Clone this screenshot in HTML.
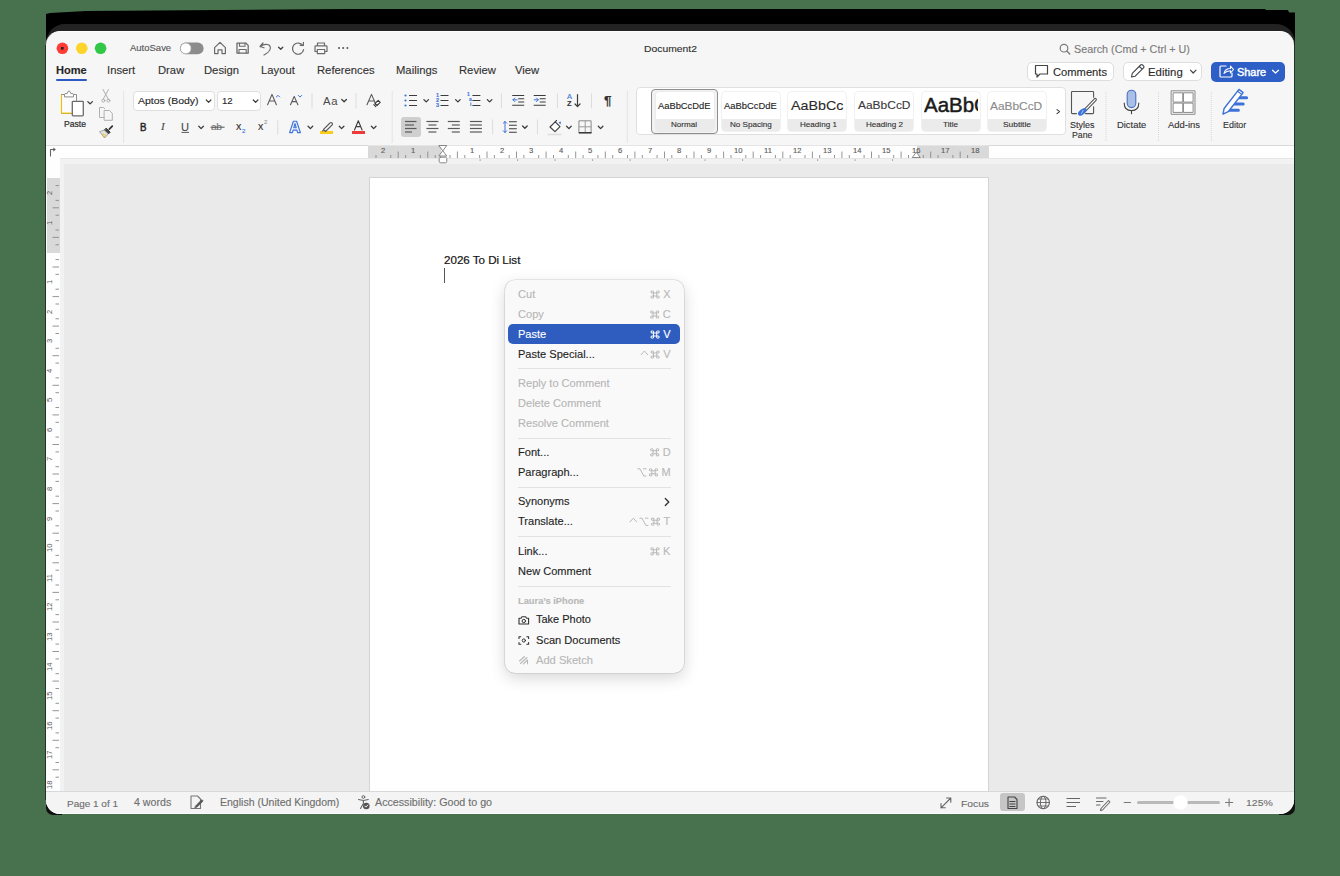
<!DOCTYPE html>
<html><head><meta charset="utf-8"><style>
*{margin:0;padding:0;box-sizing:border-box}
html,body{width:1340px;height:876px;overflow:hidden;background:#47724d;font-family:"Liberation Sans",sans-serif;color:#222}
.a{position:absolute}
.t{position:absolute;white-space:nowrap;line-height:1}
svg{position:absolute;left:0;top:0}
</style></head><body>
<div class="a" style="left:46px;top:9px;width:1248.5px;height:780px;background:#000;clip-path:polygon(0 5px,4px 4px,40px 2px,304px 0,1219px 0,1220px 1px,1242px 1px,1243px 3.5px,1249px 3.5px,1249px 100%,0 100%)"></div>
<div class="a" style="left:46px;top:24px;width:1249px;height:60px;background:#232323;border-radius:19px 19px 0 0"></div>
<div class="a" style="left:45.5px;top:795px;width:16px;height:19.5px;background:#111;border-radius:0 0 0 7px"></div>
<div class="a" style="left:1278.5px;top:795px;width:16px;height:19.5px;background:#111;border-radius:0 0 7px 0"></div>
<div class="a" style="left:46px;top:31px;width:1248px;height:783px;background:#f6f6f6;border-radius:14px;overflow:hidden;border-top:1px solid #fdfdfd"></div>
<div class="a" style="left:46px;top:144.5px;width:1248px;height:1px;background:#d9d9d9"></div>
<div class="a" style="left:46px;top:145.5px;width:1248px;height:12.5px;background:#fefefe"></div>
<div class="a" style="left:60px;top:158px;width:1234px;height:633px;background:#f2f2f2"></div>
<div class="a" style="left:64px;top:164px;width:1230px;height:627px;background:#eaeaea"></div>
<div class="a" style="left:60px;top:158px;width:1234px;height:1px;background:#e6e6e6"></div>
<div class="a" style="left:46px;top:158px;width:14px;height:633px;background:#fefefe"></div>
<div class="a" style="left:369px;top:177px;width:620px;height:614px;background:#fff;border:1px solid #d4d4d4;border-bottom:none"></div>
<div class="a" style="left:46px;top:791px;width:1248px;height:23px;background:#f4f4f4;border-top:1px solid #d8d8d8;border-radius:0 0 14px 14px;border-bottom:1px solid #fbfbfb"></div>
<div class="a" style="left:45px;top:45px;width:1px;height:755px;background:#22332a"></div>
<div class="a" style="left:1294px;top:45px;width:1px;height:755px;background:#22332a"></div>
<div class="t" style="left:130.4px;top:43.93px;font-size:9.03px;color:#555;transform:scaleX(1.0526);transform-origin:0 0;-webkit-text-stroke:0.12px #555;">AutoSave</div>
<div class="t" style="left:643.5px;top:43.63px;font-size:9.84px;color:#2e2e2e;transform:scaleX(1.0526);transform-origin:0 0;-webkit-text-stroke:0.12px #2e2e2e;">Document2</div>
<div class="t" style="left:1074.0px;top:45.31px;font-size:10.22px;color:#7a7a7a;transform:scaleX(1.0526);transform-origin:0 0;-webkit-text-stroke:0.12px #7a7a7a;">Search (Cmd + Ctrl + U)</div>
<div class="t" style="left:56.0px;top:65.18px;font-size:10.50px;color:#262626;font-weight:700;transform:scaleX(1.0526);transform-origin:0 0;-webkit-text-stroke:0.12px #262626;">Home</div>
<div class="a" style="left:56px;top:79px;width:31px;height:2px;background:#2b5bc2;border-radius:1px"></div>
<div class="t" style="left:106.7px;top:65.02px;font-size:10.69px;color:#333;transform:scaleX(1.0526);transform-origin:0 0;-webkit-text-stroke:0.12px #333;">Insert</div>
<div class="t" style="left:157.7px;top:65.02px;font-size:10.69px;color:#333;transform:scaleX(1.0526);transform-origin:0 0;-webkit-text-stroke:0.12px #333;">Draw</div>
<div class="t" style="left:204.2px;top:65.02px;font-size:10.69px;color:#333;transform:scaleX(1.0526);transform-origin:0 0;-webkit-text-stroke:0.12px #333;">Design</div>
<div class="t" style="left:260.5px;top:65.02px;font-size:10.69px;color:#333;transform:scaleX(1.0526);transform-origin:0 0;-webkit-text-stroke:0.12px #333;">Layout</div>
<div class="t" style="left:316.5px;top:65.02px;font-size:10.69px;color:#333;transform:scaleX(1.0526);transform-origin:0 0;-webkit-text-stroke:0.12px #333;">References</div>
<div class="t" style="left:395.5px;top:65.02px;font-size:10.69px;color:#333;transform:scaleX(1.0526);transform-origin:0 0;-webkit-text-stroke:0.12px #333;">Mailings</div>
<div class="t" style="left:458.7px;top:65.02px;font-size:10.69px;color:#333;transform:scaleX(1.0526);transform-origin:0 0;-webkit-text-stroke:0.12px #333;">Review</div>
<div class="t" style="left:515.4px;top:65.02px;font-size:10.69px;color:#333;transform:scaleX(1.0526);transform-origin:0 0;-webkit-text-stroke:0.12px #333;">View</div>
<div class="a" style="left:1027px;top:62px;width:87px;height:19px;background:#fff;border:1px solid #dedede;border-radius:5px"></div>
<div class="a" style="left:1123px;top:62px;width:79px;height:19px;background:#fff;border:1px solid #dedede;border-radius:5px"></div>
<div class="a" style="left:1211px;top:61.5px;width:74px;height:20px;background:#2e5fc7;border-radius:5px"></div>
<div class="t" style="left:1053.0px;top:67.38px;font-size:10.61px;color:#2a2a2a;transform:scaleX(1.0526);transform-origin:0 0;-webkit-text-stroke:0.12px #2a2a2a;">Comments</div>
<div class="t" style="left:1148.2px;top:67.21px;font-size:10.81px;color:#2a2a2a;transform:scaleX(1.0526);transform-origin:0 0;-webkit-text-stroke:0.12px #2a2a2a;">Editing</div>
<div class="t" style="left:1236.6px;top:67.60px;font-size:10.36px;color:#fff;transform:scaleX(1.0526);transform-origin:0 0;-webkit-text-stroke:0.4px #fff;">Share</div>
<div class="t" style="left:63.9px;top:121.36px;font-size:8.17px;color:#2e2e2e;transform:scaleX(1.0526);transform-origin:0 0;-webkit-text-stroke:0.2px #2e2e2e;">Paste</div>
<div class="a" style="left:132.5px;top:91.2px;width:82px;height:19.4px;background:#fff;border:1px solid #dfdfdf;border-radius:4px"></div>
<div class="a" style="left:217px;top:91.2px;width:44px;height:19.4px;background:#fff;border:1px solid #dfdfdf;border-radius:4px"></div>
<div class="t" style="left:138.0px;top:96.14px;font-size:9.96px;color:#262626;transform:scaleX(1.0526);transform-origin:0 0;-webkit-text-stroke:0.12px #262626;">Aptos (Body)</div>
<div class="t" style="left:221.5px;top:96.85px;font-size:9.12px;color:#262626;transform:scaleX(1.0526);transform-origin:0 0;-webkit-text-stroke:0.12px #262626;">12</div>
<div class="t" style="left:322.5px;top:95.68px;font-size:10.73px;color:#4a4a4a;transform:scaleX(1.0526);transform-origin:0 0;letter-spacing:0.6px">Aa</div>
<div class="t" style="left:139.9px;top:121.82px;font-size:10.80px;color:#262626;-webkit-text-stroke:0.5px #262626;transform:scaleX(0.9);transform-origin:0 0">B</div>
<div class="t" style="left:161.0px;top:121.74px;font-size:10.54px;color:#4a4a4a;transform:scaleX(1.0526);transform-origin:0 0;-webkit-text-stroke:0.12px #4a4a4a;font-family:Liberation Serif"><i>I</i></div>
<div class="t" style="left:181.2px;top:121.74px;font-size:10.54px;color:#4a4a4a;transform:scaleX(1.0526);transform-origin:0 0;-webkit-text-stroke:0.12px #4a4a4a;">U</div>
<div class="t" style="left:211.0px;top:122.46px;font-size:9.69px;color:#777;transform:scaleX(1.0526);transform-origin:0 0;-webkit-text-stroke:0.12px #777;letter-spacing:-0.3px">ab</div>
<div class="t" style="left:236.0px;top:122.14px;font-size:10.07px;color:#333;transform:scaleX(1.0526);transform-origin:0 0;-webkit-text-stroke:0.12px #333;">x</div>
<div class="t" style="left:242.2px;top:128.75px;font-size:5.70px;color:#3d72d9;transform:scaleX(1.0526);transform-origin:0 0;-webkit-text-stroke:0.12px #3d72d9;">2</div>
<div class="t" style="left:258.0px;top:122.14px;font-size:10.07px;color:#333;transform:scaleX(1.0526);transform-origin:0 0;-webkit-text-stroke:0.12px #333;">x</div>
<div class="t" style="left:264.2px;top:120.16px;font-size:5.70px;color:#999;transform:scaleX(1.0526);transform-origin:0 0;-webkit-text-stroke:0.12px #999;">2</div>
<div class="a" style="left:320px;top:131px;width:13px;height:3px;background:#f8cd1c"></div>
<div class="a" style="left:351.6px;top:131px;width:13.5px;height:3px;background:#eb3b3b"></div>
<div class="t" style="left:435.5px;top:93.26px;font-size:5.22px;color:#3d72d9;transform:scaleX(1.0526);transform-origin:0 0;-webkit-text-stroke:0.12px #3d72d9;font-weight:700">1</div>
<div class="t" style="left:435.5px;top:98.26px;font-size:5.22px;color:#3d72d9;transform:scaleX(1.0526);transform-origin:0 0;-webkit-text-stroke:0.12px #3d72d9;font-weight:700">2</div>
<div class="t" style="left:435.5px;top:103.26px;font-size:5.22px;color:#3d72d9;transform:scaleX(1.0526);transform-origin:0 0;-webkit-text-stroke:0.12px #3d72d9;font-weight:700">3</div>
<div class="t" style="left:467.4px;top:93.46px;font-size:4.75px;color:#3d72d9;transform:scaleX(1.0526);transform-origin:0 0;-webkit-text-stroke:0.12px #3d72d9;font-weight:700">1</div>
<div class="t" style="left:469.4px;top:98.46px;font-size:4.75px;color:#3d72d9;transform:scaleX(1.0526);transform-origin:0 0;-webkit-text-stroke:0.12px #3d72d9;font-weight:700">a</div>
<div class="t" style="left:470.4px;top:103.46px;font-size:4.75px;color:#3d72d9;transform:scaleX(1.0526);transform-origin:0 0;-webkit-text-stroke:0.12px #3d72d9;font-weight:700">i</div>
<div class="t" style="left:567.0px;top:94.44px;font-size:7.12px;color:#3d72d9;transform:scaleX(1.0526);transform-origin:0 0;-webkit-text-stroke:0.12px #3d72d9;">A</div>
<div class="t" style="left:567.0px;top:101.34px;font-size:7.12px;color:#333;font-weight:700;transform:scaleX(1.0526);transform-origin:0 0;-webkit-text-stroke:0.12px #333;">Z</div>
<div class="t" style="left:604.2px;top:94.60px;font-size:12.82px;color:#333;font-weight:700;transform:scaleX(1.0526);transform-origin:0 0;-webkit-text-stroke:0.12px #333;">¶</div>
<div class="a" style="left:401px;top:117px;width:20px;height:20px;background:#cfcfcf;border-radius:3px"></div>
<div class="a" style="left:636px;top:87.3px;width:430px;height:48px;background:#fff;border:1px solid #e0e0e0;border-radius:4px"></div>
<div class="a" style="left:651px;top:89.4px;width:66.5px;height:44.5px;background:#f2f2f2;border:1px solid #8e8e8e;border-radius:4px"></div>
<div class="a" style="left:655.7px;top:92.3px;width:58px;height:38.6px;background:#fff;border-radius:3px;box-shadow:0 0 0 0.5px #e4e4e4;overflow:hidden"></div>
<div class="a" style="left:655.7px;top:118.6px;width:58px;height:12.3px;background:#ebebeb;border-radius:0 0 3px 3px"></div>
<div class="t" style="left:657.9px;top:102.23px;font-size:8.90px;color:#1e1e1e;transform:scaleX(1.0526);transform-origin:0 0;-webkit-text-stroke:0.12px #1e1e1e;">AaBbCcDdE</div>
<div class="t" style="left:671.1px;top:120.76px;font-size:7.69px;color:#333;transform:scaleX(1.0526);transform-origin:0 0;-webkit-text-stroke:0.12px #333;">Normal</div>
<div class="a" style="left:722.3px;top:92.3px;width:58px;height:38.6px;background:#fff;border-radius:3px;box-shadow:0 0 0 0.5px #e4e4e4;overflow:hidden"></div>
<div class="a" style="left:722.3px;top:118.6px;width:58px;height:12.3px;background:#ebebeb;border-radius:0 0 3px 3px"></div>
<div class="t" style="left:724.3px;top:102.21px;font-size:8.93px;color:#1e1e1e;transform:scaleX(1.0526);transform-origin:0 0;-webkit-text-stroke:0.12px #1e1e1e;">AaBbCcDdE</div>
<div class="t" style="left:729.8px;top:120.76px;font-size:7.69px;color:#333;transform:scaleX(1.0526);transform-origin:0 0;-webkit-text-stroke:0.12px #333;">No Spacing</div>
<div class="a" style="left:788.3px;top:92.3px;width:58px;height:38.6px;background:#fff;border-radius:3px;box-shadow:0 0 0 0.5px #e4e4e4;overflow:hidden"></div>
<div class="a" style="left:788.3px;top:118.6px;width:58px;height:12.3px;background:#ebebeb;border-radius:0 0 3px 3px"></div>
<div class="t" style="left:791.3px;top:99.24px;font-size:13.59px;color:#2a2a2a;transform:scaleX(1.0526);transform-origin:0 0;-webkit-text-stroke:0.12px #2a2a2a;">AaBbCc</div>
<div class="t" style="left:799.5px;top:120.76px;font-size:7.69px;color:#333;transform:scaleX(1.0526);transform-origin:0 0;-webkit-text-stroke:0.12px #333;">Heading 1</div>
<div class="a" style="left:855px;top:92.3px;width:58px;height:38.6px;background:#fff;border-radius:3px;box-shadow:0 0 0 0.5px #e4e4e4;overflow:hidden"></div>
<div class="a" style="left:855px;top:118.6px;width:58px;height:12.3px;background:#ebebeb;border-radius:0 0 3px 3px"></div>
<div class="t" style="left:857.8px;top:100.34px;font-size:11.36px;color:#3a3a3a;transform:scaleX(1.0526);transform-origin:0 0;-webkit-text-stroke:0.12px #3a3a3a;">AaBbCcD</div>
<div class="t" style="left:866.0px;top:120.76px;font-size:7.69px;color:#333;transform:scaleX(1.0526);transform-origin:0 0;-webkit-text-stroke:0.12px #333;">Heading 2</div>
<div class="a" style="left:921.5px;top:92.3px;width:58px;height:38.6px;background:#fff;border-radius:3px;box-shadow:0 0 0 0.5px #e4e4e4;overflow:hidden"></div>
<div class="a" style="left:921.5px;top:118.6px;width:58px;height:12.3px;background:#ebebeb;border-radius:0 0 3px 3px"></div>
<div class="a" style="left:923.9px;top:95px;width:54.5px;height:22px;overflow:hidden">
<div class="t" style="left:0.0px;top:1.25px;font-size:19.47px;color:#1a1a1a;transform:scaleX(1.0526);transform-origin:0 0;-webkit-text-stroke:0.45px #1a1a1a;">AaBbCc</div>
</div>
<div class="t" style="left:943.3px;top:120.76px;font-size:7.69px;color:#333;transform:scaleX(1.0526);transform-origin:0 0;-webkit-text-stroke:0.12px #333;">Title</div>
<div class="a" style="left:988.2px;top:92.3px;width:58px;height:38.6px;background:#fff;border-radius:3px;box-shadow:0 0 0 0.5px #e4e4e4;overflow:hidden"></div>
<div class="a" style="left:988.2px;top:118.6px;width:58px;height:12.3px;background:#ebebeb;border-radius:0 0 3px 3px"></div>
<div class="t" style="left:990.4px;top:100.79px;font-size:11.30px;color:#8a8a8a;transform:scaleX(1.0526);transform-origin:0 0;-webkit-text-stroke:0.12px #8a8a8a;">AaBbCcD</div>
<div class="t" style="left:1003.0px;top:120.52px;font-size:7.98px;color:#333;transform:scaleX(1.0526);transform-origin:0 0;-webkit-text-stroke:0.12px #333;">Subtitle</div>
<div class="t" style="left:1069.6px;top:121.16px;font-size:8.51px;color:#333;transform:scaleX(1.0526);transform-origin:0 0;-webkit-text-stroke:0.12px #333;">Styles</div>
<div class="t" style="left:1072.4px;top:131.20px;font-size:7.52px;color:#333;transform:scaleX(1.0526);transform-origin:0 0;-webkit-text-stroke:0.12px #333;font-size:8.3px">Pane</div>
<div class="t" style="left:1117.0px;top:120.80px;font-size:8.94px;color:#333;transform:scaleX(1.0526);transform-origin:0 0;-webkit-text-stroke:0.12px #333;">Dictate</div>
<div class="t" style="left:1168.0px;top:120.78px;font-size:8.97px;color:#333;transform:scaleX(1.0526);transform-origin:0 0;-webkit-text-stroke:0.12px #333;">Add-ins</div>
<div class="t" style="left:1223.0px;top:121.20px;font-size:8.47px;color:#333;transform:scaleX(1.0526);transform-origin:0 0;-webkit-text-stroke:0.12px #333;">Editor</div>
<div class="a" style="left:367.5px;top:145.3px;width:73px;height:13.2px;background:#d9d9d9"></div>
<div class="a" style="left:916.5px;top:145.3px;width:72px;height:13.2px;background:#d9d9d9"></div>
<div class="a" style="left:367.5px;top:145px;width:621px;height:0.6px;background:#e5e5e5"></div>
<div class="t" style="left:381.3px;top:146.66px;font-size:7.22px;color:#5a5a5a;transform:scaleX(1.0526);transform-origin:0 0;-webkit-text-stroke:0.12px #5a5a5a;">2</div>
<div class="t" style="left:410.9px;top:146.66px;font-size:7.22px;color:#5a5a5a;transform:scaleX(1.0526);transform-origin:0 0;-webkit-text-stroke:0.12px #5a5a5a;">1</div>
<div class="t" style="left:470.1px;top:146.66px;font-size:7.22px;color:#5a5a5a;transform:scaleX(1.0526);transform-origin:0 0;-webkit-text-stroke:0.12px #5a5a5a;">1</div>
<div class="t" style="left:499.7px;top:146.66px;font-size:7.22px;color:#5a5a5a;transform:scaleX(1.0526);transform-origin:0 0;-webkit-text-stroke:0.12px #5a5a5a;">2</div>
<div class="t" style="left:529.2px;top:146.66px;font-size:7.22px;color:#5a5a5a;transform:scaleX(1.0526);transform-origin:0 0;-webkit-text-stroke:0.12px #5a5a5a;">3</div>
<div class="t" style="left:558.8px;top:146.66px;font-size:7.22px;color:#5a5a5a;transform:scaleX(1.0526);transform-origin:0 0;-webkit-text-stroke:0.12px #5a5a5a;">4</div>
<div class="t" style="left:588.4px;top:146.66px;font-size:7.22px;color:#5a5a5a;transform:scaleX(1.0526);transform-origin:0 0;-webkit-text-stroke:0.12px #5a5a5a;">5</div>
<div class="t" style="left:618.0px;top:146.66px;font-size:7.22px;color:#5a5a5a;transform:scaleX(1.0526);transform-origin:0 0;-webkit-text-stroke:0.12px #5a5a5a;">6</div>
<div class="t" style="left:647.6px;top:146.66px;font-size:7.22px;color:#5a5a5a;transform:scaleX(1.0526);transform-origin:0 0;-webkit-text-stroke:0.12px #5a5a5a;">7</div>
<div class="t" style="left:677.1px;top:146.66px;font-size:7.22px;color:#5a5a5a;transform:scaleX(1.0526);transform-origin:0 0;-webkit-text-stroke:0.12px #5a5a5a;">8</div>
<div class="t" style="left:706.7px;top:146.66px;font-size:7.22px;color:#5a5a5a;transform:scaleX(1.0526);transform-origin:0 0;-webkit-text-stroke:0.12px #5a5a5a;">9</div>
<div class="t" style="left:734.2px;top:146.66px;font-size:7.22px;color:#5a5a5a;transform:scaleX(1.0526);transform-origin:0 0;-webkit-text-stroke:0.12px #5a5a5a;">10</div>
<div class="t" style="left:763.8px;top:146.66px;font-size:7.22px;color:#5a5a5a;transform:scaleX(1.0526);transform-origin:0 0;-webkit-text-stroke:0.12px #5a5a5a;">11</div>
<div class="t" style="left:793.4px;top:146.66px;font-size:7.22px;color:#5a5a5a;transform:scaleX(1.0526);transform-origin:0 0;-webkit-text-stroke:0.12px #5a5a5a;">12</div>
<div class="t" style="left:822.9px;top:146.66px;font-size:7.22px;color:#5a5a5a;transform:scaleX(1.0526);transform-origin:0 0;-webkit-text-stroke:0.12px #5a5a5a;">13</div>
<div class="t" style="left:852.5px;top:146.66px;font-size:7.22px;color:#5a5a5a;transform:scaleX(1.0526);transform-origin:0 0;-webkit-text-stroke:0.12px #5a5a5a;">14</div>
<div class="t" style="left:882.1px;top:146.66px;font-size:7.22px;color:#5a5a5a;transform:scaleX(1.0526);transform-origin:0 0;-webkit-text-stroke:0.12px #5a5a5a;">15</div>
<div class="t" style="left:911.7px;top:146.66px;font-size:7.22px;color:#5a5a5a;transform:scaleX(1.0526);transform-origin:0 0;-webkit-text-stroke:0.12px #5a5a5a;">16</div>
<div class="t" style="left:941.3px;top:146.66px;font-size:7.22px;color:#5a5a5a;transform:scaleX(1.0526);transform-origin:0 0;-webkit-text-stroke:0.12px #5a5a5a;">17</div>
<div class="t" style="left:970.8px;top:146.66px;font-size:7.22px;color:#5a5a5a;transform:scaleX(1.0526);transform-origin:0 0;-webkit-text-stroke:0.12px #5a5a5a;">18</div>
<div class="a" style="left:46.5px;top:177.5px;width:13.2px;height:75px;background:#d9d9d9"></div>
<div class="t" style="left:46.0px;top:195.1px;font-size:7.6px;color:#5a5a5a;transform-origin:0 0;transform:rotate(-90deg)">2</div>
<div class="t" style="left:46.0px;top:224.7px;font-size:7.6px;color:#5a5a5a;transform-origin:0 0;transform:rotate(-90deg)">1</div>
<div class="t" style="left:46.0px;top:283.9px;font-size:7.6px;color:#5a5a5a;transform-origin:0 0;transform:rotate(-90deg)">1</div>
<div class="t" style="left:46.0px;top:313.5px;font-size:7.6px;color:#5a5a5a;transform-origin:0 0;transform:rotate(-90deg)">2</div>
<div class="t" style="left:46.0px;top:343.0px;font-size:7.6px;color:#5a5a5a;transform-origin:0 0;transform:rotate(-90deg)">3</div>
<div class="t" style="left:46.0px;top:372.6px;font-size:7.6px;color:#5a5a5a;transform-origin:0 0;transform:rotate(-90deg)">4</div>
<div class="t" style="left:46.0px;top:402.2px;font-size:7.6px;color:#5a5a5a;transform-origin:0 0;transform:rotate(-90deg)">5</div>
<div class="t" style="left:46.0px;top:431.8px;font-size:7.6px;color:#5a5a5a;transform-origin:0 0;transform:rotate(-90deg)">6</div>
<div class="t" style="left:46.0px;top:461.4px;font-size:7.6px;color:#5a5a5a;transform-origin:0 0;transform:rotate(-90deg)">7</div>
<div class="t" style="left:46.0px;top:490.9px;font-size:7.6px;color:#5a5a5a;transform-origin:0 0;transform:rotate(-90deg)">8</div>
<div class="t" style="left:46.0px;top:520.5px;font-size:7.6px;color:#5a5a5a;transform-origin:0 0;transform:rotate(-90deg)">9</div>
<div class="t" style="left:46.0px;top:552.2px;font-size:7.6px;color:#5a5a5a;transform-origin:0 0;transform:rotate(-90deg)">10</div>
<div class="t" style="left:46.0px;top:581.8px;font-size:7.6px;color:#5a5a5a;transform-origin:0 0;transform:rotate(-90deg)">11</div>
<div class="t" style="left:46.0px;top:611.4px;font-size:7.6px;color:#5a5a5a;transform-origin:0 0;transform:rotate(-90deg)">12</div>
<div class="t" style="left:46.0px;top:640.9px;font-size:7.6px;color:#5a5a5a;transform-origin:0 0;transform:rotate(-90deg)">13</div>
<div class="t" style="left:46.0px;top:670.5px;font-size:7.6px;color:#5a5a5a;transform-origin:0 0;transform:rotate(-90deg)">14</div>
<div class="t" style="left:46.0px;top:700.1px;font-size:7.6px;color:#5a5a5a;transform-origin:0 0;transform:rotate(-90deg)">15</div>
<div class="t" style="left:46.0px;top:729.7px;font-size:7.6px;color:#5a5a5a;transform-origin:0 0;transform:rotate(-90deg)">16</div>
<div class="t" style="left:46.0px;top:759.3px;font-size:7.6px;color:#5a5a5a;transform-origin:0 0;transform:rotate(-90deg)">17</div>
<div class="t" style="left:46.0px;top:788.8px;font-size:7.6px;color:#5a5a5a;transform-origin:0 0;transform:rotate(-90deg)">18</div>
<div class="t" style="left:444.2px;top:254.85px;font-size:11.00px;color:#151515;transform:scaleX(1.0526);transform-origin:0 0;-webkit-text-stroke:0.2px #151515;">2026 To Di List</div>
<div class="a" style="left:444px;top:268px;width:1px;height:14.8px;background:#555"></div>
<div class="t" style="left:66.5px;top:798.75px;font-size:9.47px;color:#6e6e6e;transform:scaleX(1.0526);transform-origin:0 0;-webkit-text-stroke:0.12px #6e6e6e;">Page 1 of 1</div>
<div class="t" style="left:134.4px;top:798.20px;font-size:10.12px;color:#6e6e6e;transform:scaleX(1.0526);transform-origin:0 0;-webkit-text-stroke:0.12px #6e6e6e;">4 words</div>
<div class="t" style="left:219.5px;top:798.30px;font-size:10.00px;color:#6e6e6e;transform:scaleX(1.0526);transform-origin:0 0;-webkit-text-stroke:0.12px #6e6e6e;">English (United Kingdom)</div>
<div class="t" style="left:375.0px;top:798.17px;font-size:10.16px;color:#6e6e6e;transform:scaleX(1.0526);transform-origin:0 0;-webkit-text-stroke:0.12px #6e6e6e;">Accessibility: Good to go</div>
<div class="t" style="left:960.6px;top:798.50px;font-size:9.77px;color:#6e6e6e;transform:scaleX(1.0526);transform-origin:0 0;-webkit-text-stroke:0.12px #6e6e6e;">Focus</div>
<div class="a" style="left:1000px;top:793.4px;width:25.4px;height:18px;background:#c6c6c6;border-radius:3px"></div>
<div class="a" style="left:1137px;top:801px;width:82.5px;height:3px;background:#b9b9b9;border-radius:1.5px"></div>

<div class="t" style="left:1246.3px;top:798.34px;font-size:9.96px;color:#6e6e6e;transform:scaleX(1.0526);transform-origin:0 0;-webkit-text-stroke:0.12px #6e6e6e;">125%</div>
<svg width="1340" height="876" viewBox="0 0 1340 876" fill="none" stroke-linecap="round" stroke-linejoin="round">
<circle cx="62.4" cy="48.3" r="5.8" fill="#fe3c35" stroke="none"/>
<circle cx="81.8" cy="48.3" r="5.8" fill="#fdd42b" stroke="none"/>
<circle cx="100.6" cy="48.3" r="5.8" fill="#33c748" stroke="none"/>
<rect x="61" y="47" width="2.6" height="2.6" fill="#222" stroke="none"/>
<rect x="180" y="42.6" width="23.6" height="11.6" rx="5.8" fill="#8c8c8c" stroke="none"/>
<circle cx="185.8" cy="48.4" r="5.4" fill="#fff" stroke="#9a9a9a" stroke-width="0.6"/>
<path d="M214.6 47.6 L220 42.4 L225.4 47.6 V53.6 H222 V49.8 H218 V53.6 H214.6 Z" stroke="#6a6a6a" stroke-width="1.2"/>
<path d="M237 43.2 H246 L248.2 45.4 V53.2 H237 Z" stroke="#6a6a6a" stroke-width="1.3"/>
<path d="M239.5 43.2 V46.2 H245 V43.2 M239 53.2 V49.5 H246.2 V53.2" stroke="#6a6a6a" stroke-width="1.1"/>
<path d="M260 46.5 L263 43 M260 46.5 L264 47.8 M260.5 46.3 C265 43 271 44 270.3 48.5 C270 51 266 54 264 55" stroke="#6a6a6a" stroke-width="1.2"/>
<path d="M278.6 47.2 L280.7 49.3 L282.8 47.2" stroke="#444" stroke-width="1.3"/>
<path d="M302.8 45.6 A5.6 5.6 0 1 0 303.6 49.6" stroke="#6a6a6a" stroke-width="1.2"/>
<path d="M300.2 45.4 H303.4 V42.4" stroke="#6a6a6a" stroke-width="1.2"/>
<path d="M317.5 46 V43 H324.5 V46 M317 51.5 H315 V46.5 Q315 45.8 316 45.8 H326 Q327 45.8 327 46.5 V51.5 H325 M317.3 49.5 H324.7 V53.6 H317.3 Z" stroke="#6a6a6a" stroke-width="1.2"/>
<circle cx="339" cy="47.9" r="1" fill="#555" stroke="none"/>
<circle cx="343.2" cy="47.9" r="1" fill="#555" stroke="none"/>
<circle cx="347.4" cy="47.9" r="1" fill="#555" stroke="none"/>
<circle cx="1064" cy="48.2" r="3.8" stroke="#7a7a7a" stroke-width="1.2"/><path d="M1066.8 51 L1069.8 54" stroke="#7a7a7a" stroke-width="1.3"/>
<path d="M1035.5 65.5 H1047.5 V74 H1040 L1037 77 V74 H1035.5 Z" stroke="#444" stroke-width="1.2"/>
<path d="M1131.5 77 L1132.3 73.3 L1140.6 65 Q1141.6 64 1142.6 65 L1143.5 65.9 Q1144.5 66.9 1143.5 67.9 L1135.2 76.2 Z M1139.3 66.3 L1142.2 69.2" stroke="#444" stroke-width="1.1"/>
<path d="M1190.4 70.2 L1193.2 73 L1196 70.2" stroke="#444" stroke-width="1.2"/>
<path d="M1226 66 H1221 Q1220 66 1220 67 V76 Q1220 77 1221 77 H1231 Q1232 77 1232 76 V73" stroke="#fff" stroke-width="1.2"/>
<path d="M1224 73.5 Q1225 68.5 1230.5 68.5 V66 L1233.5 69.5 L1230.5 73 V70.8 Q1226.5 70.8 1224 73.5 Z" stroke="#fff" stroke-width="1.1"/>
<path d="M1272.5 70.2 L1275.5 73 L1278.5 70.2" stroke="#fff" stroke-width="1.2"/>
<line x1="123.6" y1="91.5" x2="123.6" y2="142.5" stroke="#d2d2d2" stroke-width="1" stroke-dasharray="1 1" stroke-linecap="butt"/>
<line x1="392.2" y1="91.5" x2="392.2" y2="142.5" stroke="#d2d2d2" stroke-width="1" stroke-dasharray="1 1" stroke-linecap="butt"/>
<line x1="627.3" y1="91.5" x2="627.3" y2="142.5" stroke="#d2d2d2" stroke-width="1" stroke-dasharray="1 1" stroke-linecap="butt"/>
<line x1="1106" y1="92" x2="1106" y2="141" stroke="#d8d8d8" stroke-width="1" stroke-dasharray="1 1" stroke-linecap="butt"/>
<line x1="1158.5" y1="92" x2="1158.5" y2="141" stroke="#d8d8d8" stroke-width="1" stroke-dasharray="1 1" stroke-linecap="butt"/>
<line x1="1211.3" y1="92" x2="1211.3" y2="141" stroke="#d8d8d8" stroke-width="1" stroke-dasharray="1 1" stroke-linecap="butt"/>
<line x1="312" y1="93" x2="312" y2="108.5" stroke="#dcdcdc" stroke-width="1" stroke-linecap="butt"/>
<line x1="356" y1="93" x2="356" y2="108.5" stroke="#dcdcdc" stroke-width="1" stroke-linecap="butt"/>
<line x1="277.8" y1="120.3" x2="277.8" y2="134.4" stroke="#dcdcdc" stroke-width="1" stroke-linecap="butt"/>
<line x1="501.4" y1="93.4" x2="501.4" y2="108.3" stroke="#dcdcdc" stroke-width="1" stroke-linecap="butt"/>
<line x1="557.4" y1="93.4" x2="557.4" y2="108.3" stroke="#dcdcdc" stroke-width="1" stroke-linecap="butt"/>
<line x1="591.5" y1="93.4" x2="591.5" y2="108.3" stroke="#dcdcdc" stroke-width="1" stroke-linecap="butt"/>
<line x1="492.6" y1="119.5" x2="492.6" y2="134.4" stroke="#dcdcdc" stroke-width="1" stroke-linecap="butt"/>
<line x1="537.4" y1="119.5" x2="537.4" y2="134.4" stroke="#dcdcdc" stroke-width="1" stroke-linecap="butt"/>
<rect x="61.5" y="94.5" width="15" height="19" fill="#fbfbfb" stroke="none"/>
<path d="M61.5 94.5 H76.5 V100.5 M61.5 94.5 V113.5 H71.5" stroke="#8e8e8e" stroke-width="1"/>
<path d="M61.5 95 V113.2 H71" stroke="#f2c200" stroke-width="1.2" stroke-dasharray="1.2 1"/>
<path d="M64.5 96.5 V94.5 Q64.5 93.6 66 93.6 H67.2 Q67.8 91 69 91 Q70.3 91 70.8 93.6 H72 Q73.5 93.6 73.5 94.5 V96.5 Z" fill="#fff" stroke="#8e8e8e" stroke-width="1"/>
<rect x="72.3" y="101.3" width="11" height="14.5" rx="0.8" fill="#fff" stroke="#6a6a6a" stroke-width="1.3"/>
<path d="M87.8 101.6 L90.1 103.9 L92.4 101.6" stroke="#3c3c3c" stroke-width="1.3"/>
<path d="M103 89.5 L108.5 99.5 M108.5 89.5 L103 99.5" stroke="#b0b0b0" stroke-width="1"/>
<circle cx="103.4" cy="100.6" r="1.5" stroke="#b0b0b0" stroke-width="1"/><circle cx="108.4" cy="100.6" r="1.5" stroke="#b0b0b0" stroke-width="1"/>
<path d="M104 117.5 H99.5 V107.5 H103.5 L104.8 108.8" stroke="#b0b0b0" stroke-width="1"/>
<path d="M104.5 110.5 H109.5 L112.3 113.3 V120.3 H104.5 Z" stroke="#b0b0b0" stroke-width="1"/>
<path d="M112.3 126.1 L109.3 129.1" stroke="#333" stroke-width="1.8"/>
<path d="M106.4 128.4 L110.2 132.2 L108.4 134 L104.6 130.2 Z" fill="#444" stroke="#333" stroke-width="1"/>
<path d="M104.6 130.4 L108.2 134 L104.6 138 L99.8 132 Z" fill="#e2e2e2" stroke="#9a9a9a" stroke-width="0.9"/>
<circle cx="103.2" cy="134.2" r="0.8" fill="#f2c200" stroke="none"/><circle cx="105.2" cy="135" r="0.8" fill="#f2c200" stroke="none"/><circle cx="104.2" cy="136.8" r="0.8" fill="#f2c200" stroke="none"/>
<path d="M206.3 100 L208.6 102.3 L210.9 100" stroke="#3c3c3c" stroke-width="1.2"/>
<path d="M253.3 100 L255.6 102.3 L257.9 100" stroke="#3c3c3c" stroke-width="1.2"/>
<path d="M267.6 104.8 L272 94.4 L276.4 104.8 M269.3 101 H274.7" stroke="#5a5a5a" stroke-width="1.1"/>
<path d="M276.3 97 L278 95.3 L279.7 97" stroke="#3d72d9" stroke-width="1"/>
<path d="M290.5 104.8 L294.2 96.4 L297.9 104.8 M292 101.6 H296.4" stroke="#5a5a5a" stroke-width="1.1"/>
<path d="M298.3 95.4 L300 97.1 L301.7 95.4" stroke="#3d72d9" stroke-width="1"/>
<path d="M341.8 99.5 L344.1 101.8 L346.4 99.5" stroke="#3c3c3c" stroke-width="1.3"/>
<path d="M367 104.8 L371.5 94.4 L376 104.8 M368.7 101 H374.3" stroke="#5a5a5a" stroke-width="1.1"/>
<path d="M375 103.5 L378.2 100.3 L380.2 102.3 L377 105.5 Z" fill="#fff" stroke="#3c3c3c" stroke-width="1.1"/>
<path d="M373.8 104.7 L375.8 106.7" stroke="#3c3c3c" stroke-width="1.1"/>
<line x1="181.5" y1="132.4" x2="189" y2="132.4" stroke="#5a5a5a" stroke-width="1" stroke-linecap="butt"/>
<path d="M198.8 126.3 L201.1 128.6 L203.4 126.3" stroke="#3c3c3c" stroke-width="1.3"/>
<line x1="210.5" y1="127.2" x2="224.6" y2="127.2" stroke="#555" stroke-width="1" stroke-linecap="butt"/>
<path d="M289.6 132.6 L293.4 121.2 H296.6 L300.4 132.6 H297.6 L296.9 130.1 H293.1 L292.4 132.6 Z M293.8 127.7 H296.2 L295 123.6 Z" fill="#eef3fc" stroke="#3d72d9" stroke-width="1.15" fill-rule="evenodd"/>
<path d="M308.1 126.3 L310.4 128.6 L312.7 126.3" stroke="#3c3c3c" stroke-width="1.3"/>
<path d="M323.5 129.5 L330 123 Q331 122 332 123 Q333 124 332 125 L325.5 131.5 Z" fill="#fff" stroke="#5a5a5a" stroke-width="1.1"/>
<path d="M322.5 131 L323.8 129.8" stroke="#5a5a5a" stroke-width="1.1"/>
<path d="M339.3 126.3 L341.6 128.6 L343.9 126.3" stroke="#3c3c3c" stroke-width="1.3"/>
<path d="M354.5 130 L358.3 120.8 L362.1 130 M356 126.6 H360.6" stroke="#3c3c3c" stroke-width="1.1"/>
<path d="M371.4 126.3 L373.7 128.6 L376 126.3" stroke="#3c3c3c" stroke-width="1.3"/>
<line x1="409" y1="95.5" x2="417" y2="95.5" stroke="#3c3c3c" stroke-width="1" stroke-linecap="butt"/>
<circle cx="405.5" cy="95.5" r="1.1" fill="#3d72d9" stroke="none"/>
<line x1="409" y1="100.5" x2="417" y2="100.5" stroke="#3c3c3c" stroke-width="1" stroke-linecap="butt"/>
<circle cx="405.5" cy="100.5" r="1.1" fill="#3d72d9" stroke="none"/>
<line x1="409" y1="105.5" x2="417" y2="105.5" stroke="#3c3c3c" stroke-width="1" stroke-linecap="butt"/>
<circle cx="405.5" cy="105.5" r="1.1" fill="#3d72d9" stroke="none"/>
<line x1="440.5" y1="95.5" x2="448.5" y2="95.5" stroke="#3c3c3c" stroke-width="1" stroke-linecap="butt"/>
<line x1="440.5" y1="100.5" x2="448.5" y2="100.5" stroke="#3c3c3c" stroke-width="1" stroke-linecap="butt"/>
<line x1="440.5" y1="105.5" x2="448.5" y2="105.5" stroke="#3c3c3c" stroke-width="1" stroke-linecap="butt"/>
<line x1="472.4" y1="95.5" x2="480.4" y2="95.5" stroke="#3c3c3c" stroke-width="1" stroke-linecap="butt"/>
<line x1="472.4" y1="100.5" x2="480.4" y2="100.5" stroke="#3c3c3c" stroke-width="1" stroke-linecap="butt"/>
<line x1="472.4" y1="105.5" x2="480.4" y2="105.5" stroke="#3c3c3c" stroke-width="1" stroke-linecap="butt"/>
<path d="M423.90000000000003 99.6 L426.20000000000005 101.9 L428.5 99.6" stroke="#3c3c3c" stroke-width="1.3"/>
<path d="M455.6 99.6 L457.90000000000003 101.9 L460.2 99.6" stroke="#3c3c3c" stroke-width="1.3"/>
<path d="M487.3 99.6 L489.6 101.9 L491.9 99.6" stroke="#3c3c3c" stroke-width="1.3"/>
<path d="M512.2 95.5 H524.2 M518.2 98.8 H524.2 M518.2 102 H524.2 M512.2 105.3 H524.2" stroke="#3c3c3c" stroke-width="1.1" stroke-linecap="butt"/>
<path d="M517.2 99.8 H513.0 M514.8000000000001 98 L513.0 99.8 L514.8000000000001 101.6" stroke="#3d72d9" stroke-width="1"/>
<path d="M533.7 95.5 H545.7 M539.7 98.8 H545.7 M539.7 102 H545.7 M533.7 105.3 H545.7" stroke="#3c3c3c" stroke-width="1.1" stroke-linecap="butt"/>
<path d="M534.2 99.8 H538.3000000000001 M536.5 98 L538.3000000000001 99.8 L536.5 101.6" stroke="#3d72d9" stroke-width="1"/>
<path d="M577.5 94.5 V106.5 M575 104 L577.5 106.6 L580 104" stroke="#3c3c3c" stroke-width="1.2"/>
<line x1="405" y1="121.5" x2="416.5" y2="121.5" stroke="#5a5a5a" stroke-width="1.2" stroke-linecap="butt"/>
<line x1="405" y1="125" x2="414" y2="125" stroke="#5a5a5a" stroke-width="1.2" stroke-linecap="butt"/>
<line x1="405" y1="128.5" x2="416.5" y2="128.5" stroke="#5a5a5a" stroke-width="1.2" stroke-linecap="butt"/>
<line x1="405" y1="132" x2="412" y2="132" stroke="#5a5a5a" stroke-width="1.2" stroke-linecap="butt"/>
<line x1="426.4" y1="121.5" x2="438.4" y2="121.5" stroke="#5a5a5a" stroke-width="1.2" stroke-linecap="butt"/>
<line x1="428.4" y1="125" x2="436.4" y2="125" stroke="#5a5a5a" stroke-width="1.2" stroke-linecap="butt"/>
<line x1="426.4" y1="128.5" x2="438.4" y2="128.5" stroke="#5a5a5a" stroke-width="1.2" stroke-linecap="butt"/>
<line x1="428.4" y1="132" x2="436.4" y2="132" stroke="#5a5a5a" stroke-width="1.2" stroke-linecap="butt"/>
<line x1="447.8" y1="121.5" x2="459.8" y2="121.5" stroke="#5a5a5a" stroke-width="1.2" stroke-linecap="butt"/>
<line x1="451.8" y1="125" x2="459.8" y2="125" stroke="#5a5a5a" stroke-width="1.2" stroke-linecap="butt"/>
<line x1="447.8" y1="128.5" x2="459.8" y2="128.5" stroke="#5a5a5a" stroke-width="1.2" stroke-linecap="butt"/>
<line x1="451.8" y1="132" x2="459.8" y2="132" stroke="#5a5a5a" stroke-width="1.2" stroke-linecap="butt"/>
<line x1="469.9" y1="121.5" x2="481.9" y2="121.5" stroke="#5a5a5a" stroke-width="1.2" stroke-linecap="butt"/>
<line x1="469.9" y1="125" x2="481.9" y2="125" stroke="#5a5a5a" stroke-width="1.2" stroke-linecap="butt"/>
<line x1="469.9" y1="128.5" x2="481.9" y2="128.5" stroke="#5a5a5a" stroke-width="1.2" stroke-linecap="butt"/>
<line x1="469.9" y1="132" x2="481.9" y2="132" stroke="#5a5a5a" stroke-width="1.2" stroke-linecap="butt"/>
<path d="M509 121.8 H516.8 M509 125.3 H516.8 M509 128.8 H516.8 M509 132.2 H516.8" stroke="#3c3c3c" stroke-width="1.1" stroke-linecap="butt"/>
<path d="M505 121.5 V132.5 M503.3 123.2 L505 121.5 L506.7 123.2 M503.3 130.8 L505 132.5 L506.7 130.8" stroke="#3d72d9" stroke-width="1"/>
<path d="M522.6 126 L524.9 128.3 L527.2 126" stroke="#3c3c3c" stroke-width="1.3"/>
<path d="M550 127 L555.2 121.8 L560 126.6 L555 131.6 Z" fill="#fff" stroke="#3c3c3c" stroke-width="1.1"/>
<path d="M555.2 121.8 L556.5 120.5" stroke="#3c3c3c" stroke-width="1.1"/><path d="M558.5 122.5 L560.5 124.5 L561 121.5 Z" fill="#3d72d9" stroke="none"/>
<line x1="548" y1="134.5" x2="561" y2="134.5" stroke="#ddd" stroke-width="1.4"/>
<path d="M566.6 126.3 L568.9 128.6 L571.2 126.3" stroke="#3c3c3c" stroke-width="1.3"/>
<rect x="579.3" y="120.8" width="11.8" height="12" stroke="#8a8a8a" stroke-width="1"/><path d="M585.2 120.8 V132.8 M579.3 126.8 H591.1" stroke="#9a9a9a" stroke-width="1"/><path d="M579.3 132.8 H591.1" stroke="#3c3c3c" stroke-width="1.4"/>
<path d="M598.3 126.3 L600.6 128.6 L602.9 126.3" stroke="#3c3c3c" stroke-width="1.3"/>
<path d="M1057 109.6 L1059.6 111.6 L1057 113.6" stroke="#3c3c3c" stroke-width="1.1"/>
<path d="M1085.5 113.6 H1092.8 Q1093.6 113.6 1093.6 112.8 V106.8 M1093.6 97.2 V92.3 Q1093.6 91.5 1092.8 91.5 H1072.3 Q1071.5 91.5 1071.5 92.3 V112.8 Q1071.5 113.6 1072.3 113.6 H1076.5" stroke="#555" stroke-width="1.1"/>
<path d="M1095.2 99.6 L1085.6 109.6" stroke="#555" stroke-width="3.4"/><path d="M1095.2 99.6 L1085.6 109.6" stroke="#fff" stroke-width="1.3"/>
<ellipse cx="1082.3" cy="111.9" rx="5" ry="2.6" transform="rotate(-38 1082.3 111.9)" fill="#3d72d9" stroke="none"/>
<path d="M1081.5 113.5 L1083.2 110.3" stroke="#cfd9ee" stroke-width="0.8"/>
<rect x="1127.2" y="90.2" width="8.6" height="17.4" rx="4.3" fill="#a9bfe8" stroke="#4a72c0" stroke-width="1.1"/>
<path d="M1124.2 103 Q1124.2 110.6 1131.5 110.6 Q1138.8 110.6 1138.8 103 M1131.5 110.6 V113.8" stroke="#444" stroke-width="1.1"/>
<rect x="1171.5" y="90.8" width="23.5" height="23.5" stroke="#8a8a8a" stroke-width="1"/>
<rect x="1173.5" y="92.8" width="9.3" height="9.3" fill="#fff" stroke="#8a8a8a" stroke-width="1"/>
<rect x="1183.8" y="92.8" width="9.3" height="9.3" fill="#fff" stroke="#8a8a8a" stroke-width="1"/>
<rect x="1173.5" y="103.1" width="9.3" height="9.3" fill="#fff" stroke="#8a8a8a" stroke-width="1"/>
<rect x="1183.8" y="103.1" width="9.3" height="9.3" fill="#fff" stroke="#8a8a8a" stroke-width="1"/>
<path d="M1235.6 97.8 H1246.6 M1232.6 104 H1243.2 M1229.2 110.2 H1238.4" stroke="#3d72d9" stroke-width="3"/>
<path d="M1223 114.2 L1228.2 111.7 L1243.1 92.6 L1239 89.4 L1224.1 108.5 Z" fill="#fff" stroke="#3d72d9" stroke-width="1.4"/>
<path d="M1237.6 91.2 L1241.7 94.4" stroke="#3d72d9" stroke-width="1.2"/>
<path d="M376.0 155 V158 M390.8 155 V158 M398.2 151.5 V158 M405.6 155 V158 M420.4 155 V158 M427.8 151.5 V158 M435.2 155 V158 M450.0 155 V158 M457.4 151.5 V158 M464.8 155 V158 M479.6 155 V158 M487.0 151.5 V158 M494.4 155 V158 M509.2 155 V158 M516.5 151.5 V158 M523.9 155 V158 M538.7 155 V158 M546.1 151.5 V158 M553.5 155 V158 M568.3 155 V158 M575.7 151.5 V158 M583.1 155 V158 M597.9 155 V158 M605.3 151.5 V158 M612.7 155 V158 M627.5 155 V158 M634.9 151.5 V158 M642.3 155 V158 M657.1 155 V158 M664.5 151.5 V158 M671.8 155 V158 M686.6 155 V158 M694.0 151.5 V158 M701.4 155 V158 M716.2 155 V158 M723.6 151.5 V158 M731.0 155 V158 M745.8 155 V158 M753.2 151.5 V158 M760.6 155 V158 M775.4 155 V158 M782.8 151.5 V158 M790.2 155 V158 M805.0 155 V158 M812.4 151.5 V158 M819.7 155 V158 M834.5 155 V158 M841.9 151.5 V158 M849.3 155 V158 M864.1 155 V158 M871.5 151.5 V158 M878.9 155 V158 M893.7 155 V158 M901.1 151.5 V158 M908.5 155 V158 M923.3 155 V158 M930.7 151.5 V158 M938.1 155 V158 M952.9 155 V158 M960.2 151.5 V158 M967.6 155 V158" stroke="#8a8a8a" stroke-width="0.9" stroke-linecap="butt"/>
<path d="M480.1 159.2 V161 M517.6 159.2 V161 M555.1 159.2 V161 M592.6 159.2 V161 M630.1 159.2 V161 M667.6 159.2 V161 M705.1 159.2 V161 M742.6 159.2 V161 M780.1 159.2 V161 M817.6 159.2 V161 M855.1 159.2 V161 M892.6 159.2 V161" stroke="#9a9a9a" stroke-width="0.9" stroke-linecap="butt"/>
<path d="M439.2 145.5 H446.8 L443 150.5 Z M439.2 156 H446.8 L443 151 Z" fill="#fff" stroke="#7a7a7a" stroke-width="0.9"/>
<rect x="439.2" y="157.2" width="7.6" height="5.6" rx="1.5" fill="#fff" stroke="#7a7a7a" stroke-width="0.9"/>
<path d="M912.7 157.5 H920.3 L916.5 152.5 Z" fill="#fff" stroke="#7a7a7a" stroke-width="0.9"/>
<path d="M50.5 156 V149.5 H53.5" stroke="#666" stroke-width="1.1"/><path d="M53.3 147.6 L55.8 149.5 L53.3 151.4 Z" fill="#555" stroke="none"/>
<path d="M55.5 185.6 H59 M55.5 200.4 H59 M52.5 207.8 H59 M55.5 215.2 H59 M55.5 230.0 H59 M52.5 237.4 H59 M55.5 244.8 H59 M55.5 259.6 H59 M52.5 267.0 H59 M55.5 274.4 H59 M55.5 289.2 H59 M52.5 296.6 H59 M55.5 304.0 H59 M55.5 318.8 H59 M52.5 326.1 H59 M55.5 333.5 H59 M55.5 348.3 H59 M52.5 355.7 H59 M55.5 363.1 H59 M55.5 377.9 H59 M52.5 385.3 H59 M55.5 392.7 H59 M55.5 407.5 H59 M52.5 414.9 H59 M55.5 422.3 H59 M55.5 437.1 H59 M52.5 444.5 H59 M55.5 451.9 H59 M55.5 466.7 H59 M52.5 474.0 H59 M55.5 481.4 H59 M55.5 496.2 H59 M52.5 503.6 H59 M55.5 511.0 H59 M55.5 525.8 H59 M52.5 533.2 H59 M55.5 540.6 H59 M55.5 555.4 H59 M52.5 562.8 H59 M55.5 570.2 H59 M55.5 585.0 H59 M52.5 592.4 H59 M55.5 599.8 H59 M55.5 614.6 H59 M52.5 622.0 H59 M55.5 629.3 H59 M55.5 644.1 H59 M52.5 651.5 H59 M55.5 658.9 H59 M55.5 673.7 H59 M52.5 681.1 H59 M55.5 688.5 H59 M55.5 703.3 H59 M52.5 710.7 H59 M55.5 718.1 H59 M55.5 732.9 H59 M52.5 740.3 H59 M55.5 747.7 H59 M55.5 762.5 H59 M52.5 769.8 H59 M55.5 777.2 H59" stroke="#8a8a8a" stroke-width="0.9" stroke-linecap="butt"/>
<path d="M191 796 H197.5 L200.5 799 V808.5 H191 Z" stroke="#777" stroke-width="1.1"/>
<path d="M195.5 806 L201.8 799.5 L203.2 800.9 L196.9 807.3 L195 807.8 Z" fill="#555" stroke="#555" stroke-width="0.6"/>
<circle cx="363.4" cy="797" r="1.4" stroke="#666" stroke-width="1"/><path d="M358.5 799.5 L363.4 800.5 L368.3 799.5 M363.4 800.5 V803.5 L360.5 808.5" stroke="#666" stroke-width="1.1"/>
<circle cx="366.3" cy="806" r="3.3" fill="#555" stroke="none"/><path d="M364.8 806 L365.9 807.1 L367.9 805" stroke="#fff" stroke-width="0.9"/>
<path d="M941 807.8 L950.8 798 M941 803.5 V807.8 H945.3 M946.5 798 H950.8 V802.3" stroke="#666" stroke-width="1.1"/>
<path d="M1008 797 H1014.5 L1017 799.5 V808.5 H1008 Z" stroke="#444" stroke-width="1.1"/><path d="M1009.8 801.5 H1015 M1009.8 804 H1015 M1009.8 806.5 H1015" stroke="#444" stroke-width="1"/>
<circle cx="1043.2" cy="802.5" r="6.2" stroke="#666" stroke-width="1.1"/><ellipse cx="1043.2" cy="802.5" rx="2.8" ry="6.2" stroke="#666" stroke-width="1"/><path d="M1037 802.5 H1049.4 M1038.2 799 H1048.2 M1038.2 806 H1048.2" stroke="#666" stroke-width="0.9"/>
<path d="M1066.5 798.5 H1080 M1066.5 802.5 H1080 M1066.5 806.5 H1076" stroke="#666" stroke-width="1.1" stroke-linecap="butt"/>
<path d="M1096.5 798 H1106 M1096.5 801.5 H1103 M1096.5 805 H1100 M1101 808.5 L1108.5 800.5 L1110 802 L1102.5 810 L1100.5 810.5 Z" stroke="#666" stroke-width="1.05"/>
<path d="M1124.2 802.5 H1130.5" stroke="#777" stroke-width="1.1"/>
<circle cx="1180.5" cy="802.5" r="7.2" fill="#fff" stroke="none"/>
<path d="M1225.5 802.5 H1232.7 M1229.1 798.9 V806.1" stroke="#777" stroke-width="1.1"/>
</svg>
<div class="a" style="left:504.5px;top:279.5px;width:179.5px;height:393.5px;background:#f9f9f9;border-radius:10px;box-shadow:0 0 0 0.6px rgba(0,0,0,.15),0 5px 16px rgba(0,0,0,.16)"></div>
<div class="a" style="left:508.2px;top:323.8px;width:471.7px;height:20.1px;background:#2f5dbf;border-radius:5px;width:171.7px"></div>
<div class="t" style="left:517.6px;top:289.28px;font-size:10.50px;color:#b6b6b6;transform:scaleX(1.0526);transform-origin:0 0;-webkit-text-stroke:0.12px #b6b6b6;">Cut</div>
<div class="t" style="left:663.2px;top:289.05px;font-size:11.00px;color:#b9b9b9;-webkit-text-stroke:0.15px #b9b9b9;">X</div>
<div class="t" style="left:517.6px;top:309.28px;font-size:10.50px;color:#b6b6b6;transform:scaleX(1.0526);transform-origin:0 0;-webkit-text-stroke:0.12px #b6b6b6;">Copy</div>
<div class="t" style="left:662.8px;top:309.05px;font-size:11.00px;color:#b9b9b9;-webkit-text-stroke:0.15px #b9b9b9;">C</div>
<div class="t" style="left:517.6px;top:329.28px;font-size:10.50px;color:#ffffff;transform:scaleX(1.0526);transform-origin:0 0;-webkit-text-stroke:0.12px #ffffff;">Paste</div>
<div class="t" style="left:663.2px;top:329.05px;font-size:11.00px;color:#ffffff;-webkit-text-stroke:0.15px #ffffff;">V</div>
<div class="t" style="left:517.6px;top:349.28px;font-size:10.50px;color:#1f1f1f;transform:scaleX(1.0526);transform-origin:0 0;-webkit-text-stroke:0.12px #1f1f1f;">Paste Special...</div>
<div class="t" style="left:663.2px;top:349.05px;font-size:11.00px;color:#b9b9b9;-webkit-text-stroke:0.15px #b9b9b9;">V</div>
<div class="t" style="left:517.6px;top:378.28px;font-size:10.50px;color:#b6b6b6;transform:scaleX(1.0526);transform-origin:0 0;-webkit-text-stroke:0.12px #b6b6b6;">Reply to Comment</div>
<div class="t" style="left:517.6px;top:398.28px;font-size:10.50px;color:#b6b6b6;transform:scaleX(1.0526);transform-origin:0 0;-webkit-text-stroke:0.12px #b6b6b6;">Delete Comment</div>
<div class="t" style="left:517.6px;top:418.28px;font-size:10.50px;color:#b6b6b6;transform:scaleX(1.0526);transform-origin:0 0;-webkit-text-stroke:0.12px #b6b6b6;">Resolve Comment</div>
<div class="t" style="left:517.6px;top:447.08px;font-size:10.50px;color:#1f1f1f;transform:scaleX(1.0526);transform-origin:0 0;-webkit-text-stroke:0.12px #1f1f1f;">Font...</div>
<div class="t" style="left:662.8px;top:446.85px;font-size:11.00px;color:#b9b9b9;-webkit-text-stroke:0.15px #b9b9b9;">D</div>
<div class="t" style="left:517.6px;top:467.08px;font-size:10.50px;color:#1f1f1f;transform:scaleX(1.0526);transform-origin:0 0;-webkit-text-stroke:0.12px #1f1f1f;">Paragraph...</div>
<div class="t" style="left:661.6px;top:466.85px;font-size:11.00px;color:#b9b9b9;-webkit-text-stroke:0.15px #b9b9b9;">M</div>
<div class="t" style="left:517.6px;top:496.48px;font-size:10.50px;color:#1f1f1f;transform:scaleX(1.0526);transform-origin:0 0;-webkit-text-stroke:0.12px #1f1f1f;">Synonyms</div>
<div class="t" style="left:517.6px;top:516.48px;font-size:10.50px;color:#1f1f1f;transform:scaleX(1.0526);transform-origin:0 0;-webkit-text-stroke:0.12px #1f1f1f;">Translate...</div>
<div class="t" style="left:663.6px;top:516.25px;font-size:11.00px;color:#b9b9b9;-webkit-text-stroke:0.15px #b9b9b9;">T</div>
<div class="t" style="left:517.6px;top:546.08px;font-size:10.50px;color:#1f1f1f;transform:scaleX(1.0526);transform-origin:0 0;-webkit-text-stroke:0.12px #1f1f1f;">Link...</div>
<div class="t" style="left:663.0px;top:545.85px;font-size:11.00px;color:#b9b9b9;-webkit-text-stroke:0.15px #b9b9b9;">K</div>
<div class="t" style="left:517.6px;top:565.88px;font-size:10.50px;color:#1f1f1f;transform:scaleX(1.0526);transform-origin:0 0;-webkit-text-stroke:0.12px #1f1f1f;">New Comment</div>
<div class="a" style="left:517.5px;top:368.3px;width:153px;height:1px;background:#e2e2e2"></div>
<div class="a" style="left:517.5px;top:437.5px;width:153px;height:1px;background:#e2e2e2"></div>
<div class="a" style="left:517.5px;top:486.8px;width:153px;height:1px;background:#e2e2e2"></div>
<div class="a" style="left:517.5px;top:536px;width:153px;height:1px;background:#e2e2e2"></div>
<div class="a" style="left:517.5px;top:585.8px;width:153px;height:1px;background:#e2e2e2"></div>
<div class="t" style="left:517.6px;top:597.29px;font-size:8.84px;color:#b8b8b8;font-weight:700;transform:scaleX(1.0526);transform-origin:0 0;-webkit-text-stroke:0.12px #b8b8b8;">Laura’s iPhone</div>
<div class="t" style="left:536.2px;top:614.83px;font-size:10.44px;color:#1f1f1f;transform:scaleX(1.0526);transform-origin:0 0;-webkit-text-stroke:0.12px #1f1f1f;">Take Photo</div>
<div class="t" style="left:536.2px;top:634.74px;font-size:10.54px;color:#1f1f1f;transform:scaleX(1.0526);transform-origin:0 0;-webkit-text-stroke:0.12px #1f1f1f;">Scan Documents</div>
<div class="t" style="left:536.2px;top:654.60px;font-size:10.59px;color:#b6b6b6;transform:scaleX(1.0526);transform-origin:0 0;-webkit-text-stroke:0.12px #b6b6b6;">Add Sketch</div>
<svg width="1340" height="876" viewBox="0 0 1340 876" style="position:absolute;left:0;top:0" stroke-linecap="round" stroke-linejoin="round"><path transform="translate(651.0,290.8) scale(0.820,0.740)" d="M3 3 H7 V7 H3 Z M3 3 V2 A1.5 1.5 0 1 0 2 3 H3 M7 3 V2 A1.5 1.5 0 1 1 8 3 H7 M3 7 V8 A1.5 1.5 0 1 1 2 7 H3 M7 7 V8 A1.5 1.5 0 1 0 8 7 H7" stroke="#b9b9b9" stroke-width="1.25" fill="none"/><path transform="translate(650.6,310.8) scale(0.820,0.740)" d="M3 3 H7 V7 H3 Z M3 3 V2 A1.5 1.5 0 1 0 2 3 H3 M7 3 V2 A1.5 1.5 0 1 1 8 3 H7 M3 7 V8 A1.5 1.5 0 1 1 2 7 H3 M7 7 V8 A1.5 1.5 0 1 0 8 7 H7" stroke="#b9b9b9" stroke-width="1.25" fill="none"/><path transform="translate(651.0,330.8) scale(0.820,0.740)" d="M3 3 H7 V7 H3 Z M3 3 V2 A1.5 1.5 0 1 0 2 3 H3 M7 3 V2 A1.5 1.5 0 1 1 8 3 H7 M3 7 V8 A1.5 1.5 0 1 1 2 7 H3 M7 7 V8 A1.5 1.5 0 1 0 8 7 H7" stroke="#ffffff" stroke-width="1.25" fill="none"/><path transform="translate(651.0,350.8) scale(0.820,0.740)" d="M3 3 H7 V7 H3 Z M3 3 V2 A1.5 1.5 0 1 0 2 3 H3 M7 3 V2 A1.5 1.5 0 1 1 8 3 H7 M3 7 V8 A1.5 1.5 0 1 1 2 7 H3 M7 7 V8 A1.5 1.5 0 1 0 8 7 H7" stroke="#b9b9b9" stroke-width="1.25" fill="none"/><path d="M640.8 355.0 L644.4 351.0 L648.0 355.0" stroke="#b9b9b9" stroke-width="1" fill="none" stroke-linecap="butt"/><path transform="translate(650.6,448.6) scale(0.820,0.740)" d="M3 3 H7 V7 H3 Z M3 3 V2 A1.5 1.5 0 1 0 2 3 H3 M7 3 V2 A1.5 1.5 0 1 1 8 3 H7 M3 7 V8 A1.5 1.5 0 1 1 2 7 H3 M7 7 V8 A1.5 1.5 0 1 0 8 7 H7" stroke="#b9b9b9" stroke-width="1.25" fill="none"/><path transform="translate(649.4,468.6) scale(0.820,0.740)" d="M3 3 H7 V7 H3 Z M3 3 V2 A1.5 1.5 0 1 0 2 3 H3 M7 3 V2 A1.5 1.5 0 1 1 8 3 H7 M3 7 V8 A1.5 1.5 0 1 1 2 7 H3 M7 7 V8 A1.5 1.5 0 1 0 8 7 H7" stroke="#b9b9b9" stroke-width="1.25" fill="none"/><path d="M637.4 468.8 H640.0 L643.8 476.0 H646.4 M643.0 468.8 H646.4" stroke="#b9b9b9" stroke-width="1" fill="none" stroke-linecap="butt"/><path transform="translate(651.4,518.0) scale(0.820,0.740)" d="M3 3 H7 V7 H3 Z M3 3 V2 A1.5 1.5 0 1 0 2 3 H3 M7 3 V2 A1.5 1.5 0 1 1 8 3 H7 M3 7 V8 A1.5 1.5 0 1 1 2 7 H3 M7 7 V8 A1.5 1.5 0 1 0 8 7 H7" stroke="#b9b9b9" stroke-width="1.25" fill="none"/><path d="M639.4 518.2 H642.0 L645.8 525.4 H648.4 M645.0 518.2 H648.4" stroke="#b9b9b9" stroke-width="1" fill="none" stroke-linecap="butt"/><path d="M629.7 522.2 L633.3 518.2 L636.9 522.2" stroke="#b9b9b9" stroke-width="1" fill="none" stroke-linecap="butt"/><path transform="translate(650.8,547.6) scale(0.820,0.740)" d="M3 3 H7 V7 H3 Z M3 3 V2 A1.5 1.5 0 1 0 2 3 H3 M7 3 V2 A1.5 1.5 0 1 1 8 3 H7 M3 7 V8 A1.5 1.5 0 1 1 2 7 H3 M7 7 V8 A1.5 1.5 0 1 0 8 7 H7" stroke="#b9b9b9" stroke-width="1.25" fill="none"/><path d="M665.3 498.5 L668.8 502 L665.3 505.5" stroke="#333" stroke-width="1.3" fill="none"/><path d="M519 618.3 H521 L522 616.8 H525.6 L526.6 618.3 H528.6 V624 H519 Z" stroke="#333" stroke-width="1.1" fill="none"/><circle cx="523.8" cy="621" r="1.7" stroke="#333" stroke-width="1" fill="none"/><path d="M519 638.5 V636.8 H520.8 M526.8 636.8 H528.6 V638.5 M528.6 642.5 V644.2 H526.8 M520.8 644.2 H519 V642.5" stroke="#333" stroke-width="1.1" fill="none"/><circle cx="523.8" cy="640.5" r="1.6" stroke="#333" stroke-width="1" fill="none"/><path d="M519.5 661 L524.5 656.5 M520.5 663.5 L527 657.5 M523.5 663.8 L527.5 660 L527.5 663.8" stroke="#b8b8b8" stroke-width="1.1" fill="none"/></svg>
</body></html>
